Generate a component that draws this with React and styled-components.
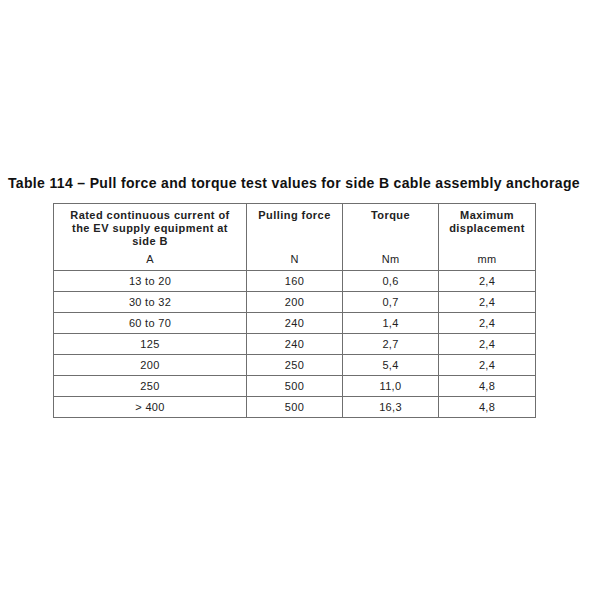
import React from "react";
import styled, { createGlobalStyle } from "styled-components";

const GlobalStyle = createGlobalStyle`
  html, body {
    margin: 0;
    padding: 0;
    background: #fff;
  }
  body {
    font-family: "Liberation Sans", Arial, sans-serif;
    color: #111;
  }
`;

const Page = styled.div`
  width: 600px;
  height: 600px;
  box-sizing: border-box;
  padding-top: 175px;
  display: flex;
  flex-direction: column;
`;

const Title = styled.h1`
  margin: 0 0 0 8px;
  font-size: 14px;
  line-height: 16px;
  font-weight: bold;
  letter-spacing: 0.34px;
  color: #111;
  white-space: nowrap;
`;

const Table = styled.table`
  margin: 12px 0 0 53px;
  width: 482px;
  border-collapse: collapse;
  table-layout: fixed;
  font-size: 11px;
  letter-spacing: 0.3px;
  color: #222;
`;

const HeadCell = styled.th`
  border-left: 1px solid #6f6f6f;
  border-right: 1px solid #6f6f6f;
  border-top: ${({ $unit }) => ($unit ? "none" : "1px solid #6f6f6f")};
  border-bottom: ${({ $unit }) => ($unit ? "1px solid #6f6f6f" : "none")};
  font-weight: ${({ $unit }) => ($unit ? "normal" : "bold")};
  letter-spacing: ${({ $unit }) => ($unit ? "0.3px" : "0.45px")};
  vertical-align: top;
  text-align: center;
  line-height: ${({ $unit }) => ($unit ? "12.5px" : "13px")};
  padding: ${({ $unit }) => ($unit ? "4px 4px 4px" : "5px 4px 0")};
  height: ${({ $unit }) => ($unit ? "11px" : "40px")};
`;

const Cell = styled.td`
  border: 1px solid #6f6f6f;
  text-align: center;
  height: 20px;
  padding: 0;
  line-height: 20px;
`;

const columns = [
  { name: ["Rated continuous current of", "the EV supply equipment at", "side B"], unit: "A", width: 193 },
  { name: ["Pulling force"], unit: "N", width: 96 },
  { name: ["Torque"], unit: "Nm", width: 96 },
  { name: ["Maximum", "displacement"], unit: "mm", width: 97 },
];

const rows = [
  ["13 to 20", "160", "0,6", "2,4"],
  ["30 to 32", "200", "0,7", "2,4"],
  ["60 to 70", "240", "1,4", "2,4"],
  ["125", "240", "2,7", "2,4"],
  ["200", "250", "5,4", "2,4"],
  ["250", "500", "11,0", "4,8"],
  ["> 400", "500", "16,3", "4,8"],
];

export default function App() {
  return (
    <Page>
      <GlobalStyle />
      <Title>Table 114 – Pull force and torque test values for side B cable assembly anchorage</Title>
      <Table>
        <colgroup>
          {columns.map((c) => (
            <col key={c.unit} style={{ width: c.width }} />
          ))}
        </colgroup>
        <thead>
          <tr>
            {columns.map((c) => (
              <HeadCell key={c.unit}>
                {c.name.map((line, i) => (
                  <React.Fragment key={i}>
                    {i > 0 && <br />}
                    {line}
                  </React.Fragment>
                ))}
              </HeadCell>
            ))}
          </tr>
          <tr>
            {columns.map((c) => (
              <HeadCell $unit key={c.unit}>
                {c.unit}
              </HeadCell>
            ))}
          </tr>
        </thead>
        <tbody>
          {rows.map((r, i) => (
            <tr key={i}>
              {r.map((v, j) => (
                <Cell key={j}>{v}</Cell>
              ))}
            </tr>
          ))}
        </tbody>
      </Table>
    </Page>
  );
}
